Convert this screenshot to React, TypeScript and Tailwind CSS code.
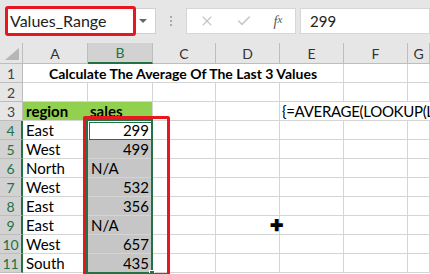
import { X, Check } from "lucide-react";

const cols = [
  { key: "A", w: "w-[65px]" },
  { key: "B", w: "w-[65px]" },
  { key: "C", w: "w-[63px]" },
  { key: "D", w: "w-[64px]" },
  { key: "E", w: "w-[64px]" },
  { key: "F", w: "w-[64px]" },
  { key: "G", w: "flex-1" },
];

const data: [string, string, boolean][] = [
  ["East", "299", true],
  ["West", "499", true],
  ["North", "N/A", false],
  ["West", "532", true],
  ["East", "356", true],
  ["East", "N/A", false],
  ["West", "657", true],
  ["South", "435", true],
];

const cellCls = "h-[19px] border-r border-b border-[#d4d4d4] box-border shrink-0";

const RowHead = ({ n, sel }: { n: number; sel?: boolean }) => (
  <div
    className={`w-[23px] h-[19px] shrink-0 box-border border-b flex items-center justify-center text-[14px] ${
      sel
        ? "bg-[#d2d2d2] text-[#217346] border-r-2 border-r-[#217346] border-b-[#bdbdbd]"
        : "bg-[#e6e6e6] text-[#444] border-r border-r-[#bdbdbd] border-b-[#bdbdbd]"
    }`}
  >
    {n}
  </div>
);

const App = () => {
  return (
    <div className="w-[430px] h-[274px] overflow-hidden bg-white relative" style={{ fontFamily: "Lato, 'Open Sans', sans-serif" }}>
      {/* formula bar */}
      <div className="h-[43px] bg-[#e6e6e6] flex items-start pt-[8px] pl-[7px] gap-0">
        <div className="w-[149px] h-[26px] bg-white border border-[#d0d0d0] flex items-center relative">
          <span className="pl-[2px] text-[16px] text-[#222]">Values_Range</span>
          <span className="absolute right-[8px] top-[10px] w-0 h-0 border-l-[4px] border-r-[4px] border-t-[4px] border-l-transparent border-r-transparent border-t-[#666]" />
          <div className="absolute left-[-3px] top-[-3px] w-[131px] h-[30px] border-[3px] border-[#e8161f] rounded-[3px]" />
        </div>
        <div className="w-[30px] h-[26px] flex flex-col items-center justify-center gap-[2px]">
          <span className="w-[2px] h-[2px] bg-[#aaa]" />
          <span className="w-[2px] h-[2px] bg-[#aaa]" />
          <span className="w-[2px] h-[2px] bg-[#aaa]" />
        </div>
        <div className="w-[110px] h-[26px] bg-white border border-[#d6d6d6] flex items-center">
          <div className="w-[40px] flex justify-center"><X size={16} strokeWidth={1.6} color="#c4c4c4" /></div>
          <div className="w-[34px] flex justify-center"><Check size={16} strokeWidth={2.4} color="#c8c8c8" /></div>
          <div className="flex-1 flex justify-center text-[14px] italic text-[#555]" style={{ fontFamily: "'Liberation Serif', serif" }}>
            f<span className="text-[11px]">x</span>
          </div>
        </div>
        <div className="ml-[4px] flex-1 h-[26px] bg-white border border-[#d6d6d6] flex items-center pl-[9px] text-[15px] text-[#222]">
          299
        </div>
      </div>

      {/* grid */}
      <div className="relative">
        <div className="flex h-[21px]">
          <div className="w-[23px] shrink-0 bg-[#e6e6e6] border-r border-b border-[#bdbdbd] box-border relative">
            <span className="absolute right-[3px] bottom-[3px] w-0 h-0" style={{ borderBottom: "12px solid #b6b6b6", borderLeft: "14px solid transparent" }} />
          </div>
          {cols.map((c) => (
            <div
              key={c.key}
              className={`${c.w} shrink-0 box-border flex items-center justify-center text-[14px] ${
                c.key === "B"
                  ? "bg-[#d2d2d2] text-[#217346] border-b-2 border-b-[#217346] border-r border-r-[#bdbdbd]"
                  : "bg-[#e6e6e6] text-[#333] border-b border-b-[#bdbdbd] border-r border-r-[#bdbdbd]"
              }`}
            >
              {c.key}
            </div>
          ))}
        </div>

        {/* row 1 */}
        <div className="flex">
          <RowHead n={1} />
          <div className="w-[321px] h-[19px] shrink-0 box-border border-r border-b border-[#d4d4d4] flex items-center justify-center text-[14px] font-bold text-black whitespace-nowrap">
            Calculate The Average Of The Last 3 Values
          </div>
          <div className={`${cellCls} w-[64px]`} />
          <div className={`${cellCls} flex-1`} />
        </div>

        {/* row 2 */}
        <div className="flex">
          <RowHead n={2} />
          {cols.map((c) => (
            <div key={c.key} className={`${cellCls} ${c.w}`} />
          ))}
        </div>

        {/* row 3 */}
        <div className="flex">
          <RowHead n={3} />
          <div className={`${cellCls} w-[65px] bg-[#92d050] border-r-[#92d050] font-bold text-[15px] pl-[3px] flex items-center`}>region</div>
          <div className={`${cellCls} w-[65px] bg-[#92d050] font-bold text-[15px] pl-[2px] flex items-center`}>sales</div>
          <div className={`${cellCls} w-[63px]`} />
          <div className={`${cellCls} w-[64px]`} />
          <div className="h-[19px] flex-1 min-w-0 border-b border-[#d4d4d4] box-border flex items-center pl-[2px] text-[15px] tracking-[-0.3px] whitespace-nowrap overflow-hidden">
            {"{=AVERAGE(LOOKUP(LA"}
          </div>
        </div>

        {data.map(([region, val, num], i) => (
          <div className="flex" key={i}>
            <RowHead n={i + 4} sel />
            <div className={`${cellCls} w-[65px] text-[15px] pl-[3px] flex items-center`}>{region}</div>
            <div
              className={`${cellCls} w-[65px] text-[15px] flex items-center px-[3px] ${num ? "justify-end" : "justify-start"} ${
                i === 0 ? "bg-white" : "bg-[#c6c6c6] border-r-[#c6c6c6]"
              }`}
            >
              {val}
            </div>
            <div className={`${cellCls} w-[63px]`} />
            <div className={`${cellCls} w-[64px] relative`}>
              {i === 5 && (
                <span className="absolute left-[54px] top-[1px] text-[16px] font-black leading-none">✚</span>
              )}
            </div>
            <div className={`${cellCls} w-[64px]`} />
            <div className={`${cellCls} w-[64px]`} />
            <div className={`${cellCls} flex-1`} />
          </div>
        ))}

        {/* selection B4:B11 */}
        <div className="absolute left-[86px] top-[76px] w-[67px] h-[155px] border-2 border-[#217346]">
          <div className="absolute left-[1px] top-[1px] w-[63px] h-[18px] border border-[#217346]" />
          <div className="absolute right-[-4px] bottom-[-4px] w-[6px] h-[6px] bg-[#217346] border border-white" />
        </div>

        {/* red annotation */}
        <div className="absolute left-[83px] top-[73px] w-[87px] h-[160px] border-[3px] border-[#e8161f] rounded-[2px]" />
      </div>
    </div>
  );
};

export default App;
